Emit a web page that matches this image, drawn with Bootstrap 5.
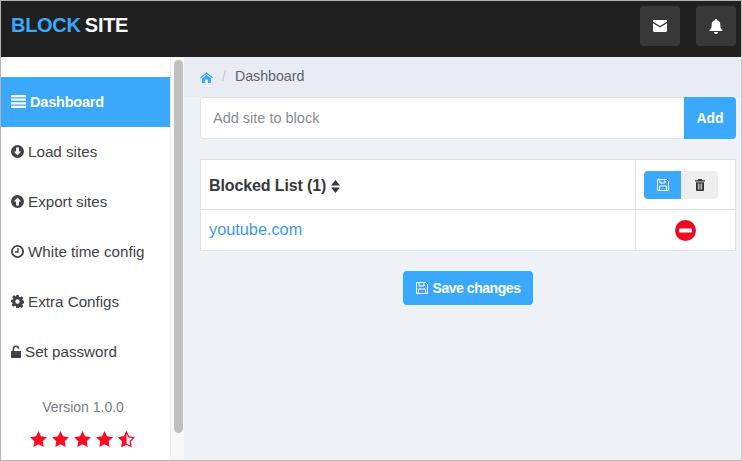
<!DOCTYPE html>
<html lang="en">
<head>
<meta charset="utf-8">
<title>Block Site</title>
<link href="https://cdn.jsdelivr.net/npm/bootstrap@5.3.0/dist/css/bootstrap.min.css" rel="stylesheet">
<style>
html,body{height:100%;overflow:hidden}
body{font-family:"Liberation Sans",Arial,sans-serif;font-size:14px;color:#3f4347;background:#eef2f7}
.app-frame{height:461px;width:742px;border:1px solid #b4b4b4;border-right-color:#c8c8c8;display:flex;flex-direction:column;overflow:hidden}
.top-bar{height:56px;background:#202020;flex:none;padding:0 5px 0 10px}
.brand-name{font-size:20px;font-weight:700;letter-spacing:-.3px;word-spacing:-1px;color:#fff;position:relative;top:-4px}
.brand-name span{color:#3aa8fb}
.top-btn{width:40px;height:40px;background:#383838;border-radius:4px;color:#fff;margin-left:16px;position:relative;top:-3px}
.side-col{width:183px;flex:none;background:#fff;overflow:hidden}
.side-inner{width:169px;padding-top:20px}
.side-link{display:flex;align-items:center;height:50px;padding:1px 0 0 10px;color:#3f4347;font-size:15.2px;text-decoration:none;gap:4px}
.side-link.on{background:#3aa8fb;color:#fff;font-weight:700;font-size:14.5px;letter-spacing:-.2px}
.side-link svg{flex:none;margin-bottom:2px}
.scroll-gutter{width:14px;background:#f8f8f8;border-left:1px solid #eee;padding:3px 2px 0 3px}
.scroll-thumb{height:373px;width:9px;background:#c1c1c1;border-radius:5px}
.version-txt{color:#7a7e83;font-size:14px;margin-top:20px;padding-right:5px}
.star-row{margin-top:13px;gap:5px;padding-right:6px}
.crumb-bar{height:40px;background:#e9edf3;padding-left:16px;color:#5d6369;font-size:14.2px;gap:9px}
.crumb-sep{color:#c3c7cb}
.add-row{margin:0 5px 0 16px;height:42px}
.add-input{border:1px solid #dfe3e8;border-right:0;border-radius:4px 0 0 4px;background:#fff;padding:0 12px;color:#8a8e92;font-size:14.5px;height:42px;box-sizing:border-box;min-width:0}
.add-input::placeholder{color:#8a8e92;opacity:1}
.add-btn{width:52px;height:42px;background:#3aa8fb;color:#fff;font-weight:700;font-size:14px;border-radius:0 4px 4px 0;border:0;padding:0}
.block-tbl{margin:20px 6px 0 16px;width:536px;background:#fff;border-collapse:collapse}
.block-tbl td{border:1px solid #dfe3e6}
.hd-cell{height:50px;padding:2px 8px 0;font-size:16px;font-weight:700;letter-spacing:-.12px;color:#37393b}
.act-cell{width:100px;padding:0 0 0 8px}
.row2{height:41px}
.site-cell{padding:0 0 2px}
.site-link{font-size:16.3px;color:#3c9ae6;text-decoration:none;padding-left:8px}
.ic-blue{width:37px;height:28px;background:#3aa8fb;border-radius:4px 0 0 4px;padding:0;border:0}
.ic-gray{width:37px;height:28px;background:#eee;border-radius:0 4px 4px 0;padding:0;border:0}
.save-wrap{margin:0 6px 0 16px;width:536px}
.save-btn{background:#3aa8fb;color:#fff;font-size:14px;font-weight:700;letter-spacing:-.45px;height:34px;width:130px;border:0;border-radius:4px;padding:0;margin-top:20px;gap:5px}
</style>
</head>
<body>
<div class="app-frame">
  <header class="top-bar d-flex align-items-center justify-content-between">
    <div class="brand-name"><span>BLOCK</span> SITE</div>
    <div class="d-flex">
      <div class="top-btn d-flex align-items-center justify-content-center"><svg width="14" height="12" viewBox="0 0 14 12" fill="#fff"><path d="M1.2 0h11.6c.7 0 1.2.5 1.2 1.1v.6L7 6 0 1.7v-.6C0 .5.5 0 1.2 0z"/><path d="M0 3.2 7 7.5l7-4.3v7.6c0 .7-.5 1.2-1.2 1.2H1.2C.5 12 0 11.500 0 10.800z"/></svg></div>
      <div class="top-btn d-flex align-items-center justify-content-center"><svg width="14" height="15" viewBox="0 0 14 15" fill="#fff"><path d="M7 0c.6 0 1 .4 1 1v.3c2 .4 3.300 2 3.300 4.200 0 4 1.300 4.800 2.700 6.500H0c1.400-1.700 2.700-2.500 2.700-6.500C2.700 3.300 4 1.700 6 1.300V1c0-.6.400-1 1-1z"/><path d="M5 13h4a2 2 0 0 1-4 0z"/></svg></div>
    </div>
  </header>
  <div class="d-flex flex-grow-1 overflow-hidden">
    <aside class="side-col d-flex">
      <div class="side-inner">
        <a class="side-link on" href="#"><svg width="15" height="13" viewBox="0 0 15 13" fill="#fff"><path d="M0 0h15v2.200H0zM0 3.600h15v2.200H0zM0 7.200h15v2.200H0zM0 10.800h15V13H0z"/></svg>Dashboard</a>
        <a class="side-link" href="#"><svg width="13" height="13" viewBox="0 0 13 13"><circle cx="6.500" cy="6.500" r="6.500" fill="#3f4347"/><path d="M5 2.500h3v4h2.200L6.500 10.400 2.800 6.500H5z" fill="#fff"/></svg>Load sites</a>
        <a class="side-link" href="#"><svg width="13" height="13" viewBox="0 0 13 13"><circle cx="6.500" cy="6.500" r="6.500" fill="#3f4347"/><path d="M5 10.500h3v-4h2.200L6.500 2.600 2.800 6.500H5z" fill="#fff"/></svg>Export sites</a>
        <a class="side-link" href="#"><svg width="13" height="13" viewBox="0 0 13 13"><circle cx="6.500" cy="6.500" r="5.600" fill="none" stroke="#3f4347" stroke-width="1.800"/><path d="M7 3v4H4" fill="none" stroke="#3f4347" stroke-width="1.300"/></svg>White time config</a>
        <a class="side-link" href="#"><svg width="13" height="13" viewBox="0 0 13 13" fill="#3f4347"><path fill-rule="evenodd" d="M5.300 0h2.400l.3 1.800 1.100.5L10.700 1.200l1.700 1.700-1.100 1.600.5 1.100 1.800.3v2.400l-1.800.3-.5 1.100 1.100 1.600-1.700 1.700-1.600-1.100-1.100.5-.3 1.800H5.300L5 11.200l-1.100-.5-1.600 1.100L.6 10.100l1.100-1.600-.5-1.100L0 7.100V4.900l1.800-.3.5-1.100L1.200 1.900 2.900.2l1.600 1.100L5 1.800zM6.500 4.300a2.200 2.200 0 1 0 0 4.400 2.200 2.200 0 0 0 0-4.400z"/></svg>Extra Configs</a>
        <a class="side-link" href="#"><svg width="10" height="13" viewBox="0 0 10 13" fill="#3f4347"><path d="M0 6h10v6a1 1 0 0 1-1 1H1a1 1 0 0 1-1-1z"/><path d="M2 6V3.200a2.600 2.600 0 0 1 5.200 0" fill="none" stroke="#3f4347" stroke-width="1.500" transform="translate(.4 .6)"/></svg>Set password</a>
        <div class="version-txt text-center">Version 1.0.0</div>
        <div class="star-row d-flex justify-content-center">
          <svg width="17" height="16" viewBox="0 0 20 19" fill="#fe0a23"><path d="M10 0l3 6.300 7 1-5 4.800 1.200 6.900L10 15.700 3.800 19 5 12.100 0 7.300l7-1z"/></svg>
          <svg width="17" height="16" viewBox="0 0 20 19" fill="#fe0a23"><path d="M10 0l3 6.300 7 1-5 4.800 1.200 6.900L10 15.700 3.800 19 5 12.100 0 7.300l7-1z"/></svg>
          <svg width="17" height="16" viewBox="0 0 20 19" fill="#fe0a23"><path d="M10 0l3 6.300 7 1-5 4.800 1.200 6.900L10 15.700 3.800 19 5 12.100 0 7.300l7-1z"/></svg>
          <svg width="17" height="16" viewBox="0 0 20 19" fill="#fe0a23"><path d="M10 0l3 6.300 7 1-5 4.800 1.200 6.900L10 15.700 3.800 19 5 12.100 0 7.300l7-1z"/></svg>
          <svg width="17" height="16" viewBox="0 0 20 19"><path d="M10 1.500l2.600 5.500 6 .9-4.300 4.200 1 6L10 15.700 4.700 18.100l1-6L1.400 7.900l6-.9z" fill="#fff" stroke="#fe0a23" stroke-width="1.500"/><path d="M10 0v15.700L3.800 19 5 12.100 0 7.300l7-1z" fill="#fe0a23"/></svg>
        </div>
      </div>
      <div class="scroll-gutter flex-grow-1"><div class="scroll-thumb"></div></div>
    </aside>
    <main class="flex-grow-1 overflow-hidden">
      <div class="crumb-bar d-flex align-items-center">
        <svg width="13" height="11" viewBox="0 0 13 11" fill="#3aa8fb"><path d="M6.500 0 13 5.600l-.8.900L6.500 1.700.8 6.500 0 5.600z"/><path d="M6.500 2.700 11 6.400V11H7.900V7.600H5.100V11H2V6.400z"/></svg>
        <span class="crumb-sep">/</span><span>Dashboard</span>
      </div>
      <div class="add-row d-flex">
        <input class="add-input flex-grow-1" placeholder="Add site to block">
        <button class="add-btn" type="button">Add</button>
      </div>
      <table class="block-tbl">
        <tr>
          <td class="hd-cell">Blocked List (1) <svg width="9" height="13" viewBox="0 0 9 13" fill="#37393b"><path d="M4.500 0 9 5.500H0zM0 7.500h9L4.500 13z"/></svg></td>
          <td class="act-cell"><div class="d-flex">
            <button class="ic-blue" type="button"><svg width="12" height="12" viewBox="0 0 12 12" fill="none" stroke="#fff"><path d="M.5.500h9l2 2v9H.5z"/><path d="M3 .500v3.500h5V.500M2.500 11.500V7h7v4.500"/></svg></button>
            <button class="ic-gray" type="button"><svg width="10" height="12" viewBox="0 0 10 12" fill="#333"><path d="M3.300 0h3.400l.6 1.300H10v1.200H0V1.300h2.700z"/><path fill-rule="evenodd" d="M1 3.200h8V11a1 1 0 0 1-1 1H2a1 1 0 0 1-1-1zM2.900 4.500v6h.8v-6zM4.600 4.500v6h.8v-6zM6.300 4.500v6h.8v-6z"/></svg></button>
          </div></td>
        </tr>
        <tr class="row2">
          <td class="site-cell"><a class="site-link" href="#">youtube.com</a></td>
          <td class="text-center p-0"><svg width="21" height="21" viewBox="0 0 21 21" class="d-block mx-auto"><circle cx="10.500" cy="10.500" r="10.500" fill="#ee0a22"/><rect x="4" y="8.500" width="13" height="4" rx="1" fill="#fff"/></svg></td>
        </tr>
      </table>
      <div class="save-wrap d-flex justify-content-center">
        <button class="save-btn d-flex align-items-center justify-content-center" type="button"><svg width="12" height="12" viewBox="0 0 12 12" fill="none" stroke="#fff"><path d="M.5.500h9l2 2v9H.5z"/><path d="M3 .500v3.500h5V.500M2.500 11.500V7h7v4.500"/></svg>Save changes</button>
      </div>
    </main>
  </div>
</div>
<script src="https://cdn.jsdelivr.net/npm/bootstrap@5.3.0/dist/js/bootstrap.bundle.min.js"></script>
</body>
</html>
